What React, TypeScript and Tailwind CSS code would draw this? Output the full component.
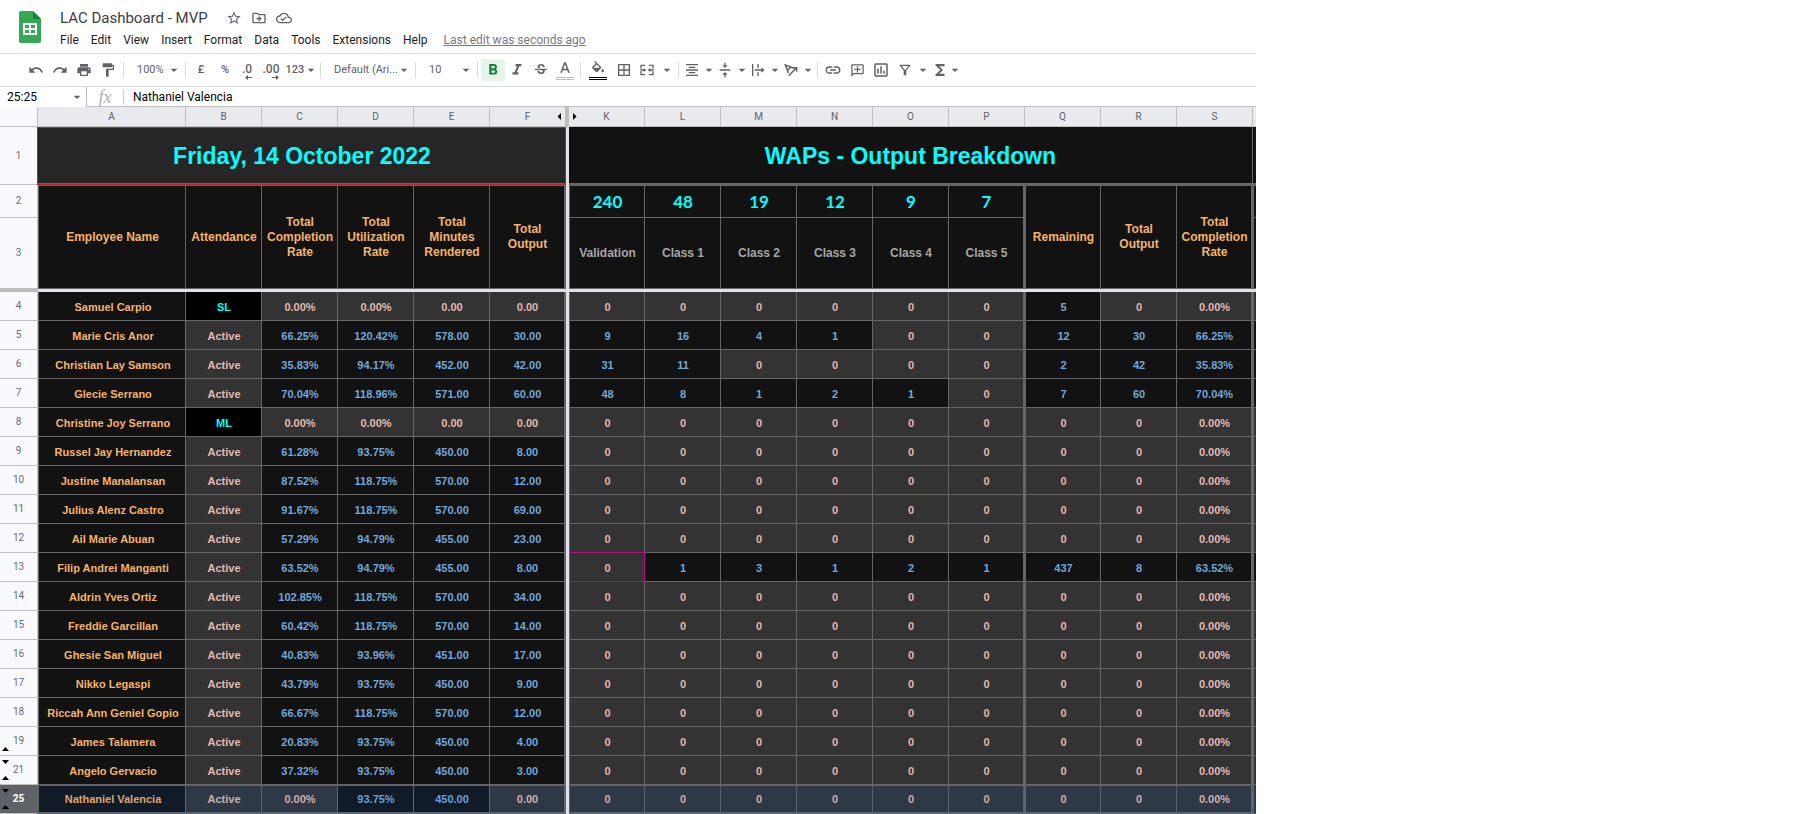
import React from "react";
import {
  MdUndo, MdRedo, MdPrint, MdFormatPaint, MdFormatBold, MdFormatItalic, MdStrikethroughS, MdBorderAll,
  MdFormatAlignCenter, MdVerticalAlignCenter, MdLink, MdOutlineAddComment,
  MdOutlineAssessment, MdOutlineFilterAlt, MdFunctions, MdStarBorder, MdOutlineDriveFileMove,
  MdOutlineCloudDone, MdArrowDropDown,
} from "react-icons/md";

type Row = { n: number; name: string; status: string; stats: string[]; out: string[] };

const zeros = ["0", "0", "0", "0", "0", "0", "0", "0", "0.00%"];

const rows: Row[] = [
  { n: 4, name: "Samuel Carpio", status: "SL", stats: ["0.00%", "0.00%", "0.00", "0.00"], out: ["0", "0", "0", "0", "0", "0", "5", "0", "0.00%"] },
  { n: 5, name: "Marie Cris Anor", status: "Active", stats: ["66.25%", "120.42%", "578.00", "30.00"], out: ["9", "16", "4", "1", "0", "0", "12", "30", "66.25%"] },
  { n: 6, name: "Christian Lay Samson", status: "Active", stats: ["35.83%", "94.17%", "452.00", "42.00"], out: ["31", "11", "0", "0", "0", "0", "2", "42", "35.83%"] },
  { n: 7, name: "Glecie Serrano", status: "Active", stats: ["70.04%", "118.96%", "571.00", "60.00"], out: ["48", "8", "1", "2", "1", "0", "7", "60", "70.04%"] },
  { n: 8, name: "Christine Joy Serrano", status: "ML", stats: ["0.00%", "0.00%", "0.00", "0.00"], out: zeros },
  { n: 9, name: "Russel Jay Hernandez", status: "Active", stats: ["61.28%", "93.75%", "450.00", "8.00"], out: zeros },
  { n: 10, name: "Justine Manalansan", status: "Active", stats: ["87.52%", "118.75%", "570.00", "12.00"], out: zeros },
  { n: 11, name: "Julius Alenz Castro", status: "Active", stats: ["91.67%", "118.75%", "570.00", "69.00"], out: zeros },
  { n: 12, name: "Ail Marie Abuan", status: "Active", stats: ["57.29%", "94.79%", "455.00", "23.00"], out: zeros },
  { n: 13, name: "Filip Andrei Manganti", status: "Active", stats: ["63.52%", "94.79%", "455.00", "8.00"], out: ["0", "1", "3", "1", "2", "1", "437", "8", "63.52%"] },
  { n: 14, name: "Aldrin Yves Ortiz", status: "Active", stats: ["102.85%", "118.75%", "570.00", "34.00"], out: zeros },
  { n: 15, name: "Freddie Garcillan", status: "Active", stats: ["60.42%", "118.75%", "570.00", "14.00"], out: zeros },
  { n: 16, name: "Ghesie San Miguel", status: "Active", stats: ["40.83%", "93.96%", "451.00", "17.00"], out: zeros },
  { n: 17, name: "Nikko Legaspi", status: "Active", stats: ["43.79%", "93.75%", "450.00", "9.00"], out: zeros },
  { n: 18, name: "Riccah Ann Geniel Gopio", status: "Active", stats: ["66.67%", "118.75%", "570.00", "12.00"], out: zeros },
  { n: 19, name: "James Talamera", status: "Active", stats: ["20.83%", "93.75%", "450.00", "4.00"], out: zeros },
  { n: 21, name: "Angelo Gervacio", status: "Active", stats: ["37.32%", "93.75%", "450.00", "3.00"], out: zeros },
  { n: 25, name: "Nathaniel Valencia", status: "Active", stats: ["0.00%", "93.75%", "450.00", "0.00"], out: zeros },
];

const targets = ["240", "48", "19", "12", "9", "7"];
const classes = ["Validation", "Class 1", "Class 2", "Class 3", "Class 4", "Class 5"];

function Caret() {
  return <MdArrowDropDown size={16} className="-mx-[3px] shrink-0" aria-hidden />;
}

function Sep() {
  return <span className="mx-[3px] h-4 w-px shrink-0 bg-[#dadce0]" />;
}

function Tool({ label, children, className = "w-6" }: { label: string; children: React.ReactNode; className?: string }) {
  return (
    <button type="button" aria-label={label} className={`flex h-[22px] shrink-0 items-center justify-center ${className}`}>
      {children}
    </button>
  );
}

function Pick({ label, value, className }: { label: string; value: string; className: string }) {
  return (
    <span className={`grid h-[22px] shrink-0 items-center pr-[3px] ${className}`}>
      <select aria-label={label} defaultValue={value} className="col-start-1 row-start-1 h-[22px] w-full appearance-none bg-transparent pl-[10px] outline-none">
        <option>{value}</option>
      </select>
      <span className="pointer-events-none col-start-1 row-start-1 justify-self-end">
        <Caret />
      </span>
    </span>
  );
}

function Glyph({ d }: { d: string }) {
  return (
    <svg width="16" height="16" viewBox="0 0 24 24" fill="currentColor" className="shrink-0" aria-hidden>
      <path d={d} />
    </svg>
  );
}

function Rotation() {
  return (
    <svg width="16" height="16" viewBox="0 0 24 24" fill="none" stroke="currentColor" strokeWidth="2.2" className="shrink-0" aria-hidden>
      <path d="M8 16.5L3.5 4.5L15.5 9M7 12.5L11.5 8" />
      <path d="M8.5 20.5L20 9M14.5 8.5H20.5V14.5" />
    </svg>
  );
}

function Decimals({ text, arrow }: { text: string; arrow: string }) {
  return (
    <span className="flex flex-col items-end pt-[3px] text-[12px] leading-[12px] font-medium">
      {text}
      <svg width="7" height="5" viewBox="0 0 7 5" fill="currentColor" aria-hidden>
        <path d={arrow} />
      </svg>
    </span>
  );
}

function Toggle({ dir, className }: { dir: "up" | "down" | "left" | "right"; className: string }) {
  const d = { up: "M0 5L3.5 1L7 5z", down: "M0 1L3.5 5L7 1z", left: "M5 0L1.5 3.5L5 7z", right: "M1 0L4.5 3.5L1 7z" }[dir];
  const vertical = dir === "up" || dir === "down";
  return (
    <button type="button" aria-label="Show hidden cells" className={`absolute ${className}`}>
      <svg width={vertical ? 7 : 6} height={vertical ? 6 : 7} viewBox={vertical ? "0 0 7 6" : "0 0 6 7"} className="block" fill="#000">
        <path d={d} />
      </svg>
    </button>
  );
}

function Header() {
  return (
    <header className="flex h-[54px] border-b border-[#dadce0] pt-2 pl-[19px]">
      <svg width="22" height="32" viewBox="0 0 22 32" className="mt-[3px] shrink-0" aria-hidden>
        <path d="M2 0H14L22 8V30a2 2 0 0 1-2 2H2a2 2 0 0 1-2-2V2a2 2 0 0 1 2-2z" fill="#34a853" />
        <path d="M14 0L22 8H14z" fill="#188038" />
        <path d="M4 12h14v12H4zM6 14v3h4v-3zM12 14v3h4v-3zM6 19v3h4v-3zM12 19v3h4v-3z" fill="#fff" fillRule="evenodd" />
      </svg>
      <div className="flex flex-col pl-[19px]">
        <div className="flex h-5 items-center text-[#5f6368]">
          <h1 className="mr-[18px] text-[15px] leading-5 text-[#3c4043]">LAC Dashboard - MVP</h1>
          <button type="button" aria-label="Star" className="mr-[9px]"><MdStarBorder size={16} /></button>
          <button type="button" aria-label="Move" className="mr-[9px]"><MdOutlineDriveFileMove size={16} /></button>
          <button type="button" aria-label="Saved to Drive"><MdOutlineCloudDone size={16} /></button>
        </div>
        <nav className="flex h-6 items-center gap-3 text-[12px] text-[#202124]">
          {["File", "Edit", "View", "Insert", "Format", "Data", "Tools", "Extensions", "Help"].map((m) => (
            <button type="button" key={m}>{m}</button>
          ))}
          <a href="#history" className="ml-1 text-[#777b80] underline">Last edit was seconds ago</a>
        </nav>
      </div>
    </header>
  );
}

function Toolbar() {
  return (
    <div role="toolbar" className="flex h-[33px] items-center border-b border-[#dadce0] pl-6 text-[11px] text-[#5f6368]">
      <Tool label="Undo"><MdUndo size={16} /></Tool>
      <Tool label="Redo"><MdRedo size={16} /></Tool>
      <Tool label="Print"><MdPrint size={16} /></Tool>
      <Tool label="Paint format"><MdFormatPaint size={16} /></Tool>
      <Sep />
      <Pick label="Zoom" value="100%" className="w-[55px]" />
      <Sep />
      <Tool label="Currency"><span className="font-medium">£</span></Tool>
      <Tool label="Percent"><span className="font-medium">%</span></Tool>
      <Tool label="Decrease decimals" className="w-5"><Decimals text=".0" arrow="M0 2.5L3 0V2H7V3H3V5z" /></Tool>
      <Tool label="Increase decimals" className="w-7"><Decimals text=".00" arrow="M7 2.5L4 0V2H0V3H4V5z" /></Tool>
      <Tool label="More formats" className="w-8 gap-[2px]"><span className="font-medium">123</span><Caret /></Tool>
      <Sep />
      <Pick label="Font" value="Default (Ari..." className="w-[88px]" />
      <Sep />
      <Pick label="Font size" value="10" className="w-[55px]" />
      <Sep />
      <Tool label="Bold" className="w-6 rounded-xs bg-[#e6f4ea] text-[#188038]"><MdFormatBold size={18} /></Tool>
      <Tool label="Italic"><MdFormatItalic size={18} /></Tool>
      <Tool label="Strikethrough"><MdStrikethroughS size={16} /></Tool>
      <Tool label="Text color">
        <span className="flex flex-col items-center pt-px">
          <Glyph d="M10.7 2L4.8 17.5h2.6l1.3-3.5h6.6l1.3 3.5h2.6L13.3 2h-2.6zm-1.2 9.7L12 5l2.5 6.7h-5z" />
          <span className="h-[3px] w-[18px] border-y border-[#f6b26b]" />
        </span>
      </Tool>
      <Sep />
      <Tool label="Fill color" className="w-7">
        <span className="flex flex-col items-center pt-px">
          <Glyph d="M16.56 8.94L7.62 0 6.21 1.41l2.38 2.38-5.15 5.15c-.59.59-.59 1.54 0 2.12l5.5 5.5c.29.29.68.44 1.06.44s.77-.15 1.06-.44l5.5-5.5c.59-.58.59-1.53 0-2.12zM5.21 10L10 5.21 14.79 10H5.21zM19 11.5s-2 2.17-2 3.5c0 1.1.9 2 2 2s2-.9 2-2c0-1.33-2-3.5-2-3.5z" />
          <span className="h-[3px] w-[18px] border-y border-black" />
        </span>
      </Tool>
      <Tool label="Borders"><MdBorderAll size={16} /></Tool>
      <Tool label="Merge cells" className="w-[39px] gap-[7px]">
        <Glyph d="M2 4h7v2H4v4H2zM15 4h7v6h-2V6h-5zM2 14h2v4h5v2H2zM20 14h2v6h-7v-2h5zM2 11h5V9l4 3-4 3v-2H2zM22 11h-5V9l-4 3 4 3v-2h5z" />
        <Caret />
      </Tool>
      <Sep />
      <Tool label="Horizontal align" className="w-[33px] gap-1"><MdFormatAlignCenter size={16} /><Caret /></Tool>
      <Tool label="Vertical align" className="w-[33px] gap-1"><MdVerticalAlignCenter size={16} /><Caret /></Tool>
      <Tool label="Text wrapping" className="w-[33px] gap-1">
        <Glyph d="M3 3h2v18H3zM11 3h2v6h-2zM11 15h2v6h-2zM7 11h10V8l5 4-5 4v-3H7z" />
        <Caret />
      </Tool>
      <Tool label="Text rotation" className="w-[33px] gap-1"><Rotation /><Caret /></Tool>
      <Sep />
      <Tool label="Insert link"><MdLink size={18} /></Tool>
      <Tool label="Insert comment"><MdOutlineAddComment size={15} className="-scale-x-100" /></Tool>
      <Tool label="Insert chart"><MdOutlineAssessment size={18} /></Tool>
      <Tool label="Filter"><MdOutlineFilterAlt size={16} /></Tool>
      <Tool label="Filter views" className="w-3"><Caret /></Tool>
      <Tool label="Functions" className="w-8 gap-px"><MdFunctions size={18} /><Caret /></Tool>
    </div>
  );
}

function FormulaBar() {
  return (
    <div className="flex h-5 text-[12px] text-black">
      <span className="grid w-[87px] shrink-0 items-center border-r border-[#c0c0c0]">
        <input aria-label="Name box" defaultValue="25:25" className="col-start-1 row-start-1 w-full bg-transparent pl-[7px] outline-none" />
        <span className="pointer-events-none col-start-1 row-start-1 mr-1 justify-self-end text-[#5f6368]"><Caret /></span>
      </span>
      <div className="flex flex-1 items-center border-b border-[#c0c0c0]">
        <span className="w-9 text-center font-['Liberation_Serif',serif] text-[18px] leading-none text-[#b0b0b0] italic">fx</span>
        <span className="h-4 w-px bg-[#c8c8c8]" />
        <input aria-label="Formula" defaultValue="Nathaniel Valencia" className="ml-[9px] flex-1 bg-transparent outline-none" />
      </div>
    </div>
  );
}

function RowHead({ n, selected = false }: { n: number; selected?: boolean }) {
  return (
    <th
      scope="row"
      className={`relative border-r border-b border-[#c0c0c0] font-['Roboto',sans-serif] text-[10px] ${
        selected ? "bg-[#5f6368] font-bold text-white" : "bg-[#f8f9fc] font-normal text-[#6b6b70]"
      }`}
    >
      {n}
      {(n === 21 || n === 25) && <Toggle dir="down" className="top-[3px] left-[2px]" />}
      {(n === 19 || n === 21 || n === 25) && <Toggle dir="up" className="bottom-[3px] left-[2px]" />}
    </th>
  );
}

function ColHead({ children }: { children: React.ReactNode }) {
  return <th scope="col" className="relative border-r border-b border-[#c0c0c0] bg-[#e8eaed] font-normal">{children}</th>;
}

const isZero = (v: string) => parseFloat(v) === 0;

function Value({ v, edge = "", selected, mark }: { v: string; edge?: string; selected: boolean; mark?: boolean }) {
  const dim = isZero(v) || v === "Active";
  const leave = v === "SL" || v === "ML";
  const tone = selected
    ? dim ? "border-[#5b6673] bg-[#2f3946] text-[#cfaead]" : "border-[#5b6673] bg-[#111b27] text-[#66a0dc]"
    : leave ? "border-[#666] bg-black text-[#00ffff]"
    : dim ? "border-[#666] bg-[#333] text-[#e6b8af]" : "border-[#666] bg-[#121212] text-[#6fa8dc]";
  return (
    <td className={`relative border-r ${selected ? "border-b-2" : "border-b"} ${edge} ${tone}`}>
      <span className={`block pl-px ${selected ? "pt-px" : "pt-[2px]"}`}>{v}</span>
      {mark && <span className="absolute -top-px -right-px -bottom-px left-0 border-y border-r border-[#b5117c]" />}
      {selected && <span className="absolute -right-[3px] top-0 left-[-1px] h-px bg-[#1f6fd6]" />}
    </td>
  );
}

function Split() {
  return <td className="relative z-10 bg-[#dde2ea]" />;
}

const statEdges = ["", "", "", "border-r-2"];
const outEdges = ["border-l", "", "", "", "", "border-r-2", "border-l", "", "border-r-2"];

function Heading({ lines, edge = "" }: { lines: string[]; edge?: string }) {
  return (
    <td rowSpan={2} className={`border-t border-r border-b border-[#666] bg-[#121212] text-[12px] leading-[15px] text-[#f6b26b] ${edge}`}>
      {lines.map((l) => <span key={l} className="block pl-px">{l}</span>)}
    </td>
  );
}

function Sheet() {
  return (
    <table className="w-0 table-fixed border-separate border-spacing-0 text-center font-['Liberation_Sans',Arial,sans-serif] text-[11px] leading-[14px] font-bold [&_td]:p-0 [&_th]:p-0">
      <colgroup>
        <col className="w-[38px]" />
        <col className="w-[148px]" />
        <col span={5} className="w-[76px]" />
        <col className="w-[3px]" />
        <col span={9} className="w-[76px]" />
        <col className="w-[3px]" />
      </colgroup>
      <thead>
        <tr className="h-5 font-['Roboto',sans-serif] text-[10px] text-[#5f6368]">
          <th className="border-r border-b border-[#c0c0c0] bg-[#f8f9fc]" aria-label="Select all" />
          {"ABCDE".split("").map((c) => <ColHead key={c}>{c}</ColHead>)}
          <ColHead>F<Toggle dir="left" className="top-[6px] right-[3px]" /></ColHead>
          <th className="bg-[#bdbdbd]" aria-label="Frozen columns" />
          <ColHead>K<Toggle dir="right" className="top-[6px] left-[3px]" /></ColHead>
          {"LMNOPQRS".split("").map((c) => <ColHead key={c}>{c}</ColHead>)}
          <th className="border-b border-[#c0c0c0] bg-[#e8eaed]" aria-label="T" />
        </tr>
      </thead>
      <tbody>
        <tr className="h-[58px] text-[23px] leading-7 text-[#00ffff]">
          <RowHead n={1} />
          <td colSpan={6} className="relative border-b-2 border-[#666] bg-[#262626]">
            <span className="block pt-[2px]">Friday, 14 October 2022</span>
            <span className="absolute top-0 right-0 -bottom-[2px] -left-px border border-[#b3262b]" />
          </td>
          <Split />
          <td colSpan={9} className="border-r border-b-2 border-[#666] bg-[#121212]">
            <span className="block pt-[2px]">WAPs - Output Breakdown</span>
          </td>
          <td className="border-b-2 border-[#666] bg-[#121212]" />
        </tr>
        <tr className="h-[33px]">
          <RowHead n={2} />
          <Heading lines={["Employee Name"]} edge="border-l" />
          <Heading lines={["Attendance"]} />
          <Heading lines={["Total", "Completion", "Rate"]} />
          <Heading lines={["Total", "Utilization", "Rate"]} />
          <Heading lines={["Total", "Minutes", "Rendered"]} />
          <Heading lines={["Total", "Output"]} edge="border-r-2" />
          <Split />
          {targets.map((t, i) => (
            <td key={t} className={`border-t border-r border-b border-[#666] bg-[#121212] font-['Lato',sans-serif] text-[17px] leading-5 text-[#00ffff] ${outEdges[i]}`}>
              <span className="block pl-px">{t}</span>
            </td>
          ))}
          <Heading lines={["Remaining"]} edge="border-l" />
          <Heading lines={["Total", "Output"]} />
          <Heading lines={["Total", "Completion", "Rate"]} edge="border-r-2" />
          <td className="border-t border-b border-l border-[#666] bg-[#121212]" />
        </tr>
        <tr className="h-[71px]">
          <RowHead n={3} />
          <Split />
          {classes.map((c, i) => (
            <td key={c} className={`border-r border-b border-[#666] bg-[#121212] text-[12px] text-[#a6a6a6] ${outEdges[i]}`}>
              <span className="block pl-px">{c}</span>
            </td>
          ))}
          <td className="border-b border-l border-[#666] bg-[#121212]" />
        </tr>
        <tr className="h-[3px] leading-none">
          <td className="bg-[#bdbdbd]" />
          <td colSpan={17} className="bg-[#dde2ea]" />
        </tr>
        {rows.map((r) => {
          const sel = r.n === 25;
          return (
            <tr key={r.n} className="h-[29px]">
              <RowHead n={r.n} selected={sel} />
              <td className={`relative border-r border-l border-[#666] ${sel ? "border-b-2 bg-[#111b27] text-[#dda56d]" : "border-b bg-[#121212] text-[#f6b26b]"}`}>
                <span className={`block pl-[2px] ${sel ? "pt-px" : "pt-[2px]"}`}>{r.name}</span>
                {sel && <span className="absolute top-0 -right-px -bottom-[2px] -left-[2px] border border-[#1f6fd6]" />}
              </td>
              <Value v={r.status} selected={sel} />
              {r.stats.map((v, i) => <Value key={i} v={v} edge={statEdges[i]} selected={sel} />)}
              <Split />
              {r.out.map((v, i) => <Value key={i} v={v} edge={outEdges[i]} selected={sel} mark={r.n === 13 && i === 0} />)}
              <td className={`border-b border-l ${sel ? "border-[#5b6673] bg-[#2f3946]" : isZero(r.out[8]) ? "border-[#666] bg-[#333]" : "border-[#666] bg-[#121212]"}`} />
            </tr>
          );
        })}
      </tbody>
    </table>
  );
}

export default function App() {
  return (
    <main className="w-fit bg-white font-['Roboto',sans-serif]">
      <Header />
      <Toolbar />
      <FormulaBar />
      <Sheet />
    </main>
  );
}
